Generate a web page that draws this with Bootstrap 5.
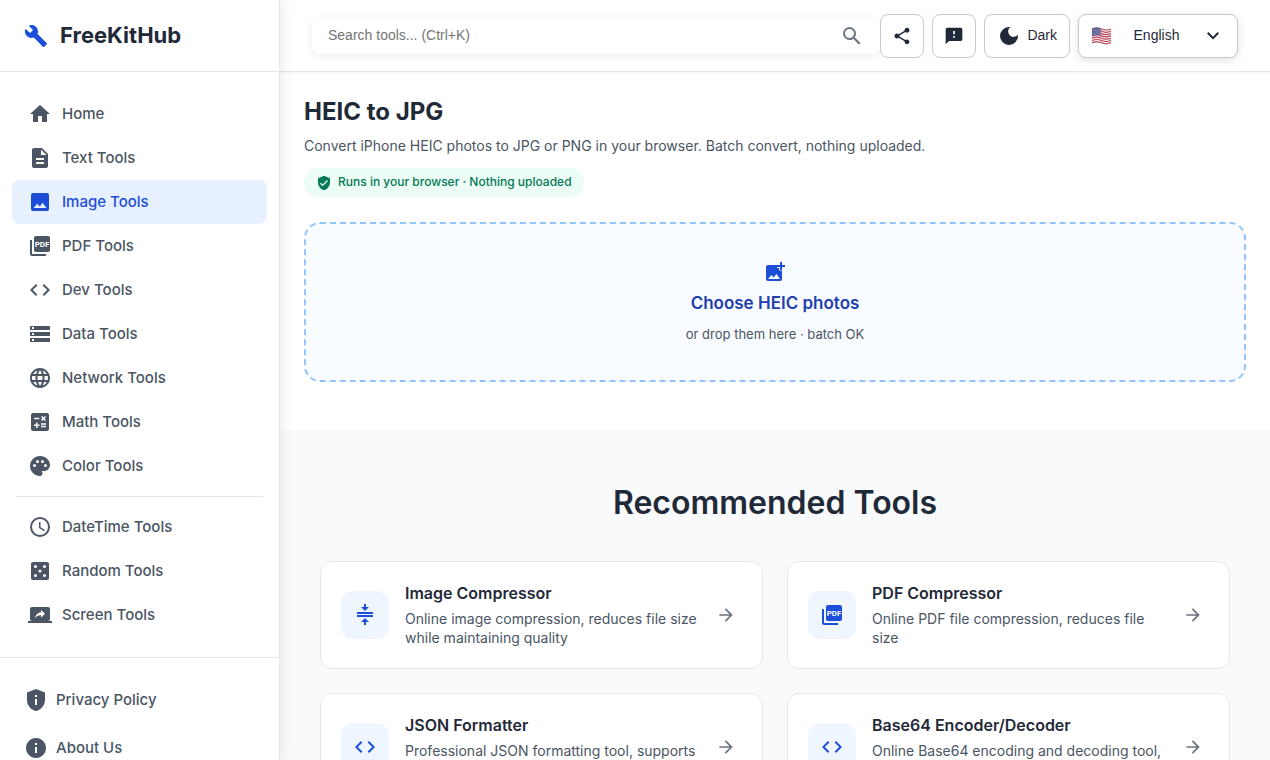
<!DOCTYPE html>
<html lang="en">
<head>
<meta charset="utf-8">
<meta name="viewport" content="width=device-width, initial-scale=1">
<title>HEIC to JPG - FreeKitHub</title>
<link rel="stylesheet" href="https://cdn.jsdelivr.net/npm/bootstrap@5.3.0/dist/css/bootstrap.min.css">
<style>
  body { font-family: Inter, "Liberation Sans", sans-serif; color: #1f2937; background: #fff; }
  svg { fill: currentColor; flex: none; display: block; }
  a { text-decoration: none; }
  .side { width: 280px; height: 100vh; top: 0; z-index: 20; flex: none; overflow: hidden; background: #fff; border-right: 1px solid #e5e7eb; box-shadow: 2px 0 12px rgba(0,0,0,.08); }
  .brand { height: 72px; font-size: 22px; font-weight: 700; color: #1f2937; border-bottom: 1px solid #e5e7eb; padding: 0 24px; gap: 12px; }
  .brand svg { color: #1d4ed8; }
  .side-list { padding: 20px 12px; }
  .side-item { height: 44px; padding: 0 16px; gap: 10px; border-radius: 8px; font-size: 15px; font-weight: 500; color: #4b5563; }
  .side-item.active { background: #e6f0ff; color: #1d4ed8; }
  .side-rule { height: 1px; margin: 8px 4px; background: #e5e7eb; }
  .side-foot { border-top: 1px solid #e5e7eb; padding: 18px 24px; }
  .side-foot a { height: 48px; gap: 8px; font-size: 15px; font-weight: 500; color: #4b5563; }
  .topbar { height: 72px; padding: 0 32px; border-bottom: 1px solid #e5e7eb; box-shadow: 0 1px 3px rgba(0,0,0,.05); font-family: "Liberation Sans", Arial, sans-serif; }
  .finder { height: 36px; border-radius: 8px; box-shadow: 0 2px 8px rgba(0,0,0,.08); padding: 0 16px; }
  .finder input { border: 0; outline: 0; background: none; font-size: 14px; }
  .finder input::placeholder { color: #757575; }
  .tool-btn { height: 44px; min-width: 44px; border: 1px solid #c3c8d2; border-radius: 8px; background: #fff; color: #1f2937; font-size: 14px; }
  .dark-btn { padding: 0 12px; gap: 6px; }
  .lang-btn { width: 160px; padding: 0 12px; box-shadow: 0 2px 8px rgba(0,0,0,.12); }
  .intro { padding: 24px 24px 48px; }
  h1 { font-size: 24px; line-height: 32px; font-weight: 700; margin: 0 0 8px; }
  .lede { font-size: 14px; line-height: 20px; color: #4b5563; margin: 0 0 12px; }
  .safe-pill { height: 29px; padding: 0 12px; gap: 6px; border-radius: 15px; background: #ecfdf5; color: #047857; font-size: 12px; line-height: 18px; font-weight: 500; }
  .safe-pill span { padding-bottom: 2px; }
  .drop { height: 160px; margin-top: 25px; border: 2px dashed #93c5fd; border-radius: 16px; background: #f8fbff; cursor: pointer; }
  .drop svg { color: #1d4ed8; }
  .drop strong { font-size: 17px; line-height: 26px; font-weight: 600; color: #1e40af; margin: 6px 0 8px; }
  .drop small { font-size: 13px; line-height: 20px; color: #4b5563; }
  .more { background: #f9fafb; padding: 48px 40px; }
  h2 { font-size: 32px; line-height: 50px; font-weight: 600; margin: 0 0 33px; text-align: center; }
  .tool { padding: 20px; border: 1px solid #e5e7eb; border-radius: 12px; background: #fff; color: #1f2937; }
  .tool-icon { width: 48px; height: 48px; border-radius: 12px; background: #eff6ff; color: #1d4ed8; flex: none; margin-right: 16px; }
  .tool h3 { font-size: 16px; line-height: 22px; font-weight: 600; margin: 0 0 5px; }
  .tool p { font-size: 14px; line-height: 19px; color: #4b5563; margin: 0 0 1px; }
  .go { width: 32px; height: 32px; color: #6b7280; flex: none; }
  .pdf-label { font: 700 8px Roboto, sans-serif; fill: #fff; }
</style>
<script src="https://cdn.jsdelivr.net/npm/bootstrap@5.3.0/dist/js/bootstrap.bundle.min.js"></script>
</head>
<body>
<svg class="d-none" aria-hidden="true">
  <symbol id="pdf" viewBox="0 0 24 24"><rect x="6" y="2" width="16" height="16" rx="2"/><path d="M4 6H2v14c0 1.1.9 2 2 2h14v-2H4z"/><text class="pdf-label" x="14" y="13" text-anchor="middle">PDF</text></symbol>
  <symbol id="code" viewBox="0 0 24 24"><path d="M9.4 16.6L4.8 12l4.6-4.6L8 6l-6 6 6 6 1.4-1.4zm5.2 0l4.6-4.6-4.6-4.6L16 6l6 6-6 6-1.4-1.4z"/></symbol>
  <symbol id="arrow" viewBox="0 0 24 24"><path d="M12 4l-1.41 1.41L16.17 11H4v2h12.17l-5.58 5.59L12 20l8-8z"/></symbol>
</svg>
<div class="d-flex align-items-start">
  <aside class="side position-sticky">
    <a href="#" class="brand d-flex align-items-center"><svg width="24" height="24" viewBox="0 0 24 24"><path d="M22.7 19l-9.1-9.1c.9-2.3.4-5-1.5-6.9-2-2-5-2.4-7.4-1.3L9 6 6 9 1.6 4.7C.4 7.1.9 10.1 2.9 12.1c1.9 1.9 4.6 2.4 6.9 1.5l9.1 9.1c.4.4 1 .4 1.4 0l2.3-2.3c.5-.4.5-1.1.1-1.4z"/></svg>FreeKitHub</a>
    <nav class="side-list" aria-label="Tools">
      <a href="#" class="side-item d-flex align-items-center"><svg width="24" height="24" viewBox="0 0 24 24"><path d="M10 20v-6h4v6h5v-8h3L12 3 2 12h3v8z"/></svg>Home</a>
      <a href="#" class="side-item d-flex align-items-center"><svg width="24" height="24" viewBox="0 0 24 24"><path d="M14 2H6c-1.1 0-2 .9-2 2v16c0 1.1.9 2 2 2h12c1.1 0 2-.9 2-2V8l-6-6zm2 16H8v-2h8v2zm0-4H8v-2h8v2zm-3-5V3.5L18.5 9H13z"/></svg>Text Tools</a>
      <a href="#" class="side-item active d-flex align-items-center" aria-current="page"><svg width="24" height="24" viewBox="0 0 24 24"><path fill-rule="evenodd" d="M5 3h14a2 2 0 0 1 2 2v14a2 2 0 0 1-2 2H5a2 2 0 0 1-2-2V5a2 2 0 0 1 2-2zM5.500 18h13L14.500 12.800 11.800 16.500 9.300 13.800z"/></svg>Image Tools</a>
      <a href="#" class="side-item d-flex align-items-center"><svg width="24" height="24"><use href="#pdf"/></svg>PDF Tools</a>
      <a href="#" class="side-item d-flex align-items-center"><svg width="24" height="24"><use href="#code"/></svg>Dev Tools</a>
      <a href="#" class="side-item d-flex align-items-center"><svg width="24" height="24" viewBox="0 0 24 24"><path d="M2 20h20v-4H2v4zm2-3h2v2H4v-2zM2 4v4h20V4H2zm4 3H4V5h2v2zm-4 7h20v-4H2v4zm2-3h2v2H4v-2z"/></svg>Data Tools</a>
      <a href="#" class="side-item d-flex align-items-center"><svg width="24" height="24" viewBox="0 0 24 24"><path d="M11.99 2C6.47 2 2 6.48 2 12s4.47 10 9.99 10C17.52 22 22 17.52 22 12S17.52 2 11.99 2zm6.93 6h-2.95c-.32-1.25-.78-2.45-1.38-3.56 1.84.63 3.37 1.91 4.33 3.56zM12 4.04c.83 1.2 1.48 2.53 1.91 3.96h-3.82c.43-1.43 1.08-2.76 1.91-3.96zM4.26 14C4.1 13.36 4 12.69 4 12s.1-1.36.26-2h3.38c-.08.66-.14 1.32-.14 2 0 .68.06 1.34.14 2H4.26zm.82 2h2.95c.32 1.25.78 2.45 1.38 3.56-1.84-.63-3.37-1.9-4.33-3.56zm2.95-8H5.08c.96-1.66 2.49-2.93 4.33-3.56C8.81 5.55 8.35 6.75 8.03 8zM12 19.96c-.83-1.2-1.48-2.53-1.91-3.96h3.82c-.43 1.43-1.08 2.76-1.91 3.96zM14.34 14H9.66c-.09-.66-.16-1.32-.16-2 0-.68.07-1.35.16-2h4.68c.09.65.16 1.32.16 2 0 .68-.07 1.34-.16 2zm.25 5.56c.6-1.11 1.06-2.31 1.38-3.56h2.95c-.96 1.65-2.49 2.93-4.33 3.56zM16.36 14c.08-.66.14-1.32.14-2 0-.68-.06-1.34-.14-2h3.38c.16.64.26 1.31.26 2s-.1 1.36-.26 2h-3.38z"/></svg>Network Tools</a>
      <a href="#" class="side-item d-flex align-items-center"><svg width="24" height="24" viewBox="0 0 24 24"><path d="M19 3H5c-1.1 0-2 .9-2 2v14c0 1.1.9 2 2 2h14c1.1 0 2-.9 2-2V5c0-1.1-.9-2-2-2zm-5.97 4.06L14.09 6l1.41 1.41L16.91 6l1.06 1.06-1.41 1.41 1.41 1.41-1.06 1.06-1.41-1.4-1.41 1.41-1.06-1.06 1.41-1.41-1.41-1.42zm-6.78.66h5v1.5h-5v-1.5zM11.5 16h-2v2H8v-2H6v-1.5h2v-2h1.5v2h2V16zm6.5 1.25h-5v-1.5h5v1.5zm0-2.5h-5v-1.5h5v1.5z"/></svg>Math Tools</a>
      <a href="#" class="side-item d-flex align-items-center"><svg width="24" height="24" viewBox="0 0 24 24"><path d="M12 2C6.49 2 2 6.49 2 12s4.49 10 10 10c1.38 0 2.5-1.12 2.5-2.5 0-.61-.23-1.2-.64-1.67-.08-.1-.13-.21-.13-.33 0-.28.22-.5.5-.5H16c3.31 0 6-2.69 6-6 0-4.96-4.49-9-10-9zm5.500 11a1.500 1.500 0 1 1 0-3 1.500 1.500 0 0 1 0 3zm-3-4a1.500 1.500 0 1 1 0-3 1.500 1.500 0 0 1 0 3zm-5 0a1.500 1.500 0 1 1 0-3 1.500 1.500 0 0 1 0 3zm-3 4a1.500 1.500 0 1 1 0-3 1.500 1.500 0 0 1 0 3z"/></svg>Color Tools</a>
      <div class="side-rule"></div>
      <a href="#" class="side-item d-flex align-items-center"><svg width="24" height="24" viewBox="0 0 24 24"><path d="M12 2a10 10 0 1 0 0 20 10 10 0 0 0 0-20zm0 18a8 8 0 1 1 0-16 8 8 0 0 1 0 16zm.5-13H11v6l5.250 3.150.750-1.230-4.500-2.670z"/></svg>DateTime Tools</a>
      <a href="#" class="side-item d-flex align-items-center"><svg width="24" height="24" viewBox="0 0 24 24"><path d="M19 3H5c-1.1 0-2 .9-2 2v14c0 1.1.9 2 2 2h14c1.1 0 2-.9 2-2V5c0-1.1-.9-2-2-2zM7.500 18a1.500 1.500 0 1 1 0-3 1.500 1.500 0 0 1 0 3zm0-9a1.500 1.500 0 1 1 0-3 1.500 1.500 0 0 1 0 3zm4.500 4.500a1.500 1.500 0 1 1 0-3 1.500 1.500 0 0 1 0 3zm4.500 4.500a1.500 1.500 0 1 1 0-3 1.500 1.500 0 0 1 0 3zm0-9a1.500 1.500 0 1 1 0-3 1.500 1.500 0 0 1 0 3z"/></svg>Random Tools</a>
      <a href="#" class="side-item d-flex align-items-center"><svg width="24" height="24" viewBox="0 0 24 24"><path d="M20 18c1.1 0 2-.9 2-2V6c0-1.110-.9-2-2-2H4c-1.110 0-2 .89-2 2v10c0 1.1.89 2 2 2H0v2h24v-2h-4zm-7-3.530v-2.190c-2.780 0-4.610.85-6 2.720.56-2.670 2.110-5.330 6-5.870V7l4 3.730-4 3.740z"/></svg>Screen Tools</a>
    </nav>
    <div class="side-foot">
      <a href="#" class="d-flex align-items-center"><svg width="24" height="24" viewBox="0 0 24 24"><path d="M12 1L3 4.400v7.600c0 5.100 3.840 9.900 9 11 5.160-1.100 9-5.900 9-11V4.400zM11 7h2v2h-2zm0 4h2v6h-2z"/></svg>Privacy Policy</a>
      <a href="#" class="d-flex align-items-center"><svg width="24" height="24" viewBox="0 0 24 24"><path d="M12 2C6.480 2 2 6.480 2 12s4.480 10 10 10 10-4.480 10-10S17.520 2 12 2zm1 15h-2v-6h2v6zm0-8h-2V7h2v2z"/></svg>About Us</a>
    </div>
  </aside>
  <div class="flex-grow-1">
    <header class="topbar d-flex align-items-center">
      <div class="finder d-flex align-items-center flex-grow-1">
        <input type="search" class="flex-grow-1 p-0" placeholder="Search tools... (Ctrl+K)" aria-label="Search tools">
        <svg width="24" height="24" viewBox="0 0 24 24" color="#6b7280"><path d="M15.500 14h-.79l-.28-.27A6.470 6.470 0 0 0 16 9.500 6.500 6.500 0 1 0 9.500 16c1.610 0 3.090-.59 4.230-1.570l.27.28v.79l5 4.990L20.490 19l-4.990-5zm-6 0C7.010 14 5 11.990 5 9.500S7.010 5 9.500 5 14 7.010 14 9.500 11.990 14 9.500 14z"/></svg>
      </div>
      <div class="d-flex gap-2">
        <button type="button" class="tool-btn p-0 d-flex align-items-center justify-content-center" aria-label="Share"><svg width="20" height="20" viewBox="0 0 24 24"><path d="M18 16.080c-.76 0-1.440.3-1.960.77L8.910 12.700c.05-.23.09-.46.09-.7s-.04-.47-.09-.7l7.050-4.110c.54.5 1.250.81 2.040.81 1.660 0 3-1.340 3-3s-1.340-3-3-3-3 1.340-3 3c0 .24.04.47.09.7L8.040 9.810C7.500 9.310 6.790 9 6 9c-1.660 0-3 1.340-3 3s1.340 3 3 3c.79 0 1.500-.31 2.040-.81l7.120 4.160c-.05.21-.08.43-.08.65 0 1.610 1.310 2.920 2.920 2.920s2.920-1.310 2.920-2.920-1.310-2.920-2.920-2.920z"/></svg></button>
        <button type="button" class="tool-btn p-0 d-flex align-items-center justify-content-center" aria-label="Feedback"><svg width="20" height="20" viewBox="0 0 24 24"><path d="M20 2H4c-1.100 0-2 .9-2 2v18l4-4h14c1.100 0 2-.9 2-2V4c0-1.100-.9-2-2-2zm-7 12h-2v-2h2v2zm0-4h-2V6h2v4z"/></svg></button>
        <button type="button" class="tool-btn d-flex align-items-center dark-btn"><svg width="24" height="24" viewBox="0 0 24 24"><path d="M12 3a9 9 0 1 0 9 9c0-.46-.04-.92-.1-1.360A5.400 5.400 0 1 1 13.360 3.100 9 9 0 0 0 12 3z"/></svg><span>Dark</span></button>
        <button type="button" class="tool-btn lang-btn d-flex align-items-center justify-content-between"><svg width="21" height="18" viewBox="0 0 21 18"><path fill="#f3e9ec" d="M1 2q5-2 9.500 0t9.500 0v14q-5 2-9.500 0T1 16z"/><path fill="none" stroke="#bb4656" stroke-width="1.200" d="M1 2q5-2 9.500 0t9.500 0M1 4.300q5-2 9.500 0t9.500 0M1 6.600q5-2 9.500 0t9.500 0M1 8.900q5-2 9.500 0t9.500 0M1 11.200q5-2 9.500 0t9.500 0M1 13.500q5-2 9.500 0t9.500 0M1 15.800q5-2 9.500 0t9.500 0"/><path fill="#595d91" d="M1 1.500q5-2 8.500-.2v7.600Q6 7 1 8.700z"/><path stroke="#a5a9c8" stroke-dasharray="1 1" d="M2 3h7M3 5h6M2 7h7"/></svg><span>English</span><svg width="24" height="24" viewBox="0 0 24 24"><path d="M7.410 8.090L12 12.670l4.590-4.580L18 9.500l-6 6-6-6z"/></svg></button>
      </div>
    </header>
    <main>
      <section class="intro">
        <h1>HEIC to JPG</h1>
        <p class="lede">Convert iPhone HEIC photos to JPG or PNG in your browser. Batch convert, nothing uploaded.</p>
        <div class="d-flex"><div class="safe-pill d-flex align-items-center"><svg width="16" height="16" viewBox="0 0 24 24"><path d="M12 1L3 5v6c0 5.550 3.840 10.740 9 12 5.160-1.260 9-6.450 9-12V5l-9-4zm-2 16l-4-4 1.410-1.410L10 14.170l6.590-6.590L18 9l-8 8z"/></svg><span>Runs in your browser · Nothing uploaded</span></div></div>
        <button type="button" class="drop w-100 d-flex flex-column align-items-center justify-content-center">
          <svg width="24" height="24" viewBox="0 0 24 24"><path fill-rule="evenodd" d="M5 5h8v4h3v3h3v7a2 2 0 0 1-2 2H5a2 2 0 0 1-2-2V7a2 2 0 0 1 2-2zM5 19h12l-3.500-5-2.900 3.600L8.500 15z"/><path d="M13 5h1v3h2v2.500h3V19h-2l-4-9z"/><path d="M17 2h2v3h3v2h-3v3h-2V7h-3V5h3z"/></svg>
          <strong>Choose HEIC photos</strong><small>or drop them here · batch OK</small>
        </button>
      </section>
      <section class="more">
        <h2>Recommended Tools</h2>
        <div class="row row-cols-2 g-4">
          <div class="col"><a href="#" class="tool d-flex align-items-center h-100"><span class="tool-icon d-flex align-items-center justify-content-center"><svg width="24" height="24" viewBox="0 0 24 24"><path d="M8 19h3v3h2v-3h3l-4-4-4 4zm8-15h-3V1h-2v3H8l4 4 4-4zM4 9v2h16V9H4zm0 3v2h16v-2H4z"/></svg></span><div class="flex-grow-1"><h3>Image Compressor</h3><p>Online image compression, reduces file size while maintaining quality</p></div><span class="go ms-2 d-flex align-items-center justify-content-center"><svg width="20" height="20"><use href="#arrow"/></svg></span></a></div>
          <div class="col"><a href="#" class="tool d-flex align-items-center h-100"><span class="tool-icon d-flex align-items-center justify-content-center"><svg width="24" height="24"><use href="#pdf"/></svg></span><div class="flex-grow-1"><h3>PDF Compressor</h3><p>Online PDF file compression, reduces file size</p></div><span class="go ms-2 d-flex align-items-center justify-content-center"><svg width="20" height="20"><use href="#arrow"/></svg></span></a></div>
          <div class="col"><a href="#" class="tool d-flex align-items-center h-100"><span class="tool-icon d-flex align-items-center justify-content-center"><svg width="24" height="24"><use href="#code"/></svg></span><div class="flex-grow-1"><h3>JSON Formatter</h3><p>Professional JSON formatting tool, supports validation and minifying</p></div><span class="go ms-2 d-flex align-items-center justify-content-center"><svg width="20" height="20"><use href="#arrow"/></svg></span></a></div>
          <div class="col"><a href="#" class="tool d-flex align-items-center h-100"><span class="tool-icon d-flex align-items-center justify-content-center"><svg width="24" height="24"><use href="#code"/></svg></span><div class="flex-grow-1"><h3>Base64 Encoder/Decoder</h3><p>Online Base64 encoding and decoding tool, supports text and files</p></div><span class="go ms-2 d-flex align-items-center justify-content-center"><svg width="20" height="20"><use href="#arrow"/></svg></span></a></div>
        </div>
      </section>
    </main>
  </div>
</div>
</body>
</html>
